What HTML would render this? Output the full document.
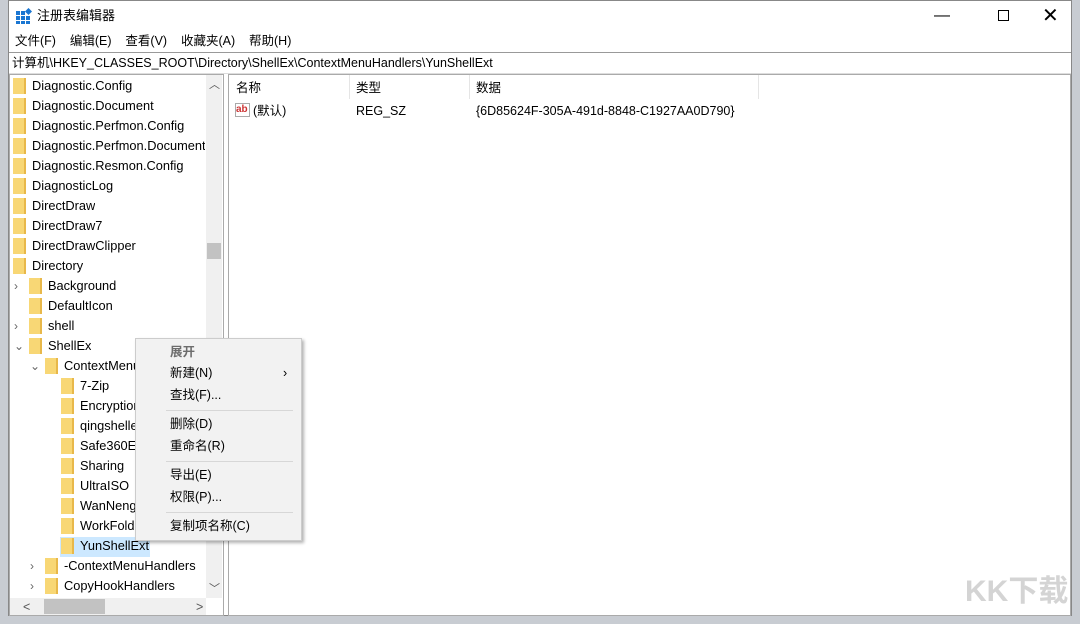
<!DOCTYPE html>
<html><head><meta charset="utf-8"><style>
*{margin:0;padding:0;box-sizing:border-box}
body{width:1080px;height:624px;background:#c8ccd2;position:relative;overflow:hidden;font-family:"Liberation Sans","Noto Sans CJK SC",sans-serif;font-size:12.5px;color:#000}
.win{position:absolute;left:8px;top:0;width:1064px;height:616px;background:#fff;border:1px solid #888}
.abs{position:absolute;white-space:nowrap;line-height:16px}
.fold{position:absolute;width:13px;height:16px;background:#f8d775;border-right:2px solid #e8b84a}
.row{position:absolute;height:20px;line-height:20px;font-size:12.8px;white-space:nowrap}
.menu{position:absolute;left:135px;top:338px;width:167px;height:203px;background:#f2f2f2;border:1px solid #ccc;box-shadow:2px 2px 3px rgba(0,0,0,.3)}
.mi{position:absolute;left:34px;line-height:16px;white-space:nowrap}
.sep{position:absolute;left:30px;right:8px;height:1px;background:#d7d7d7}
</style></head><body>
<div class="win">
 <svg class="abs" style="left:7px;top:7px" width="16" height="16"><g fill="#1a76d2"><rect x="0" y="3" width="4" height="4"/><rect x="5" y="3" width="4" height="4"/><rect x="0" y="8" width="4" height="4"/><rect x="5" y="8" width="4" height="4"/><rect x="10" y="8" width="4" height="4"/><rect x="0" y="13" width="4" height="3"/><rect x="5" y="13" width="4" height="3"/><rect x="10" y="13" width="4" height="3"/><rect x="10" y="1" width="5" height="5" transform="rotate(45 12.5 3.5)"/></g></svg>
 <div class="abs" style="left:28px;top:7px;font-size:13px">注册表编辑器</div>
 <div class="abs" style="left:925px;top:0;font-size:16px;line-height:30px">&#8212;</div>
 <div class="abs" style="left:989px;top:9px;width:11px;height:11px;border:1px solid #000"></div>
 <div class="abs" style="left:1033px;top:2px;font-size:20px;line-height:26px">✕</div>
 <div class="abs" style="left:6px;top:32px">文件(F)&nbsp;&nbsp;&nbsp;&nbsp;编辑(E)&nbsp;&nbsp;&nbsp;&nbsp;查看(V)&nbsp;&nbsp;&nbsp;&nbsp;收藏夹(A)&nbsp;&nbsp;&nbsp;&nbsp;帮助(H)</div>
 <div class="abs" style="left:0;top:51px;width:1062px;height:22px;border-top:1px solid #999;border-bottom:1px solid #ddd;padding:3px 3px;line-height:15px">计算机\HKEY_CLASSES_ROOT\Directory\ShellEx\ContextMenuHandlers\YunShellExt</div>
 <div class="abs" style="left:0;top:73px;width:215px;height:542px;border:1px solid #aaa"></div>
 <div class="abs" style="left:197px;top:74px;width:16px;height:523px;background:#f0f0f0"></div>
 <div class="abs" style="left:198px;top:242px;width:14px;height:16px;background:#c2c2c2"></div>
 <div class="abs" style="left:200px;top:76px;font-size:11px;color:#555">︿</div>
 <div class="abs" style="left:200px;top:580px;font-size:11px;color:#555">﹀</div>
 <div class="abs" style="left:1px;top:597px;width:196px;height:17px;background:#f0f0f0"></div>
 <div class="abs" style="left:35px;top:598px;width:61px;height:15px;background:#c2c2c2"></div>
 <div class="abs" style="left:14px;top:598px;color:#555">&lt;</div>
 <div class="abs" style="left:187px;top:598px;color:#555">&gt;</div>
 <div class="abs" style="left:219px;top:73px;width:843px;height:542px;border:1px solid #aaa"></div>
 <div class="abs" style="left:227px;top:79px">名称</div>
 <div class="abs" style="left:340px;top:74px;width:1px;height:24px;background:#e5e5e5"></div>
 <div class="abs" style="left:347px;top:79px">类型</div>
 <div class="abs" style="left:460px;top:74px;width:1px;height:24px;background:#e5e5e5"></div>
 <div class="abs" style="left:467px;top:79px">数据</div>
 <div class="abs" style="left:749px;top:74px;width:1px;height:24px;background:#e5e5e5"></div>
 <div class="abs" style="left:226px;top:102px;width:15px;height:14px;border:1px solid #aaa;background:#fff;color:#c33;font-size:10px;font-weight:bold;line-height:11px">ab</div>
 <div class="abs" style="left:244px;top:102px">(默认)</div>
 <div class="abs" style="left:347px;top:102px">REG_SZ</div>
 <div class="abs" style="left:467px;top:102px">{6D85624F-305A-491d-8848-C1927AA0D790}</div>
 <div class="abs" style="left:51px;top:536px;width:90px;height:20px;background:#cce8ff"></div>
</div>
<div id="tree"></div>
<div class="menu">
 <div class="mi" style="top:5px;color:#6d6d6d;font-weight:bold">展开</div>
 <div class="mi" style="top:26px">新建(N)</div><div class="abs" style="left:147px;top:26px">›</div>
 <div class="mi" style="top:48px">查找(F)...</div>
 <div class="sep" style="top:71px"></div>
 <div class="mi" style="top:77px">删除(D)</div>
 <div class="mi" style="top:99px">重命名(R)</div>
 <div class="sep" style="top:122px"></div>
 <div class="mi" style="top:128px">导出(E)</div>
 <div class="mi" style="top:150px">权限(P)...</div>
 <div class="sep" style="top:173px"></div>
 <div class="mi" style="top:179px">复制项名称(C)</div>
</div>
<div class="abs" style="left:965px;top:575px;font-size:30px;line-height:34px;font-weight:bold;color:#d4d4d4">KK下载</div>
<script>
var items=[[0,"Diagnostic.Config"],[0,"Diagnostic.Document"],[0,"Diagnostic.Perfmon.Config"],[0,"Diagnostic.Perfmon.Document"],[0,"Diagnostic.Resmon.Config"],[0,"DiagnosticLog"],[0,"DirectDraw"],[0,"DirectDraw7"],[0,"DirectDrawClipper"],[0,"Directory"],[1,"Background",">"],[1,"DefaultIcon"],[1,"shell",">"],[1,"ShellEx","v"],[2,"ContextMenuHandlers","v"],[3,"7-Zip"],[3,"EncryptionMenu"],[3,"qingshellext"],[3,"Safe360Ext"],[3,"Sharing"],[3,"UltraISO"],[3,"WanNengPDF"],[3,"WorkFolders"],[3,"YunShellExt"],[2,"-ContextMenuHandlers",">"],[2,"CopyHookHandlers",">"]];
var h="";items.forEach(function(it,i){var y=76+i*20,x=13+it[0]*16;
h+='<div class="fold" style="left:'+x+'px;top:'+(y+2)+'px"></div>';
h+='<div class="row" style="left:'+(x+19)+'px;top:'+y+'px;max-width:'+(205-x-19)+'px;overflow:hidden">'+it[1]+'</div>';
if(it[2])h+='<div class="abs" style="left:'+(x-15)+'px;top:'+(y+2)+'px;color:#666;font-size:12px">'+(it[2]==">"?"›":"⌄")+'</div>';});
document.getElementById("tree").innerHTML=h;
</script>
</body></html>
